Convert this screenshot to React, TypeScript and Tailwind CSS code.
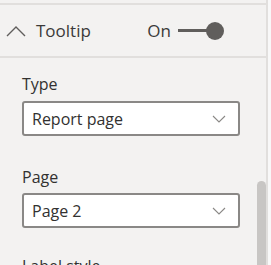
import React from 'react';

const ChevronDown: React.FC = () => (
  <svg width="14" height="8" viewBox="0 0 14 8" fill="none">
    <path d="M1 1l6 6 6-6" stroke="#8a8886" strokeWidth="1.1" />
  </svg>
);

const Dropdown: React.FC<{ value: string }> = ({ value }) => (
  <div className="h-[35px] w-[218px] border-2 border-[#8a8886] rounded-[3px] bg-white flex items-center justify-between pl-[8px] pr-[12px]">
    <span className="text-[16px] text-[#323130]">{value}</span>
    <ChevronDown />
  </div>
);

const App: React.FC = () => {
  return (
    <div
      className="w-[271px] h-[265px] overflow-hidden bg-[#f3f2f1] flex"
      style={{ fontFamily: '"Segoe UI", "Open Sans", sans-serif' }}
    >
      <div className="relative w-[268px] h-full border-r-2 border-[#e1dfdd]">
        <div className="h-[3px]" />

        {/* header */}
        <div className="h-[55px] border-y-2 border-[#e1dfdd] flex items-center">
          <svg width="20" height="12" viewBox="0 0 20 12" fill="none" className="ml-[6px]">
            <path d="M1 11l9-9 9 9" stroke="#605e5c" strokeWidth="1.4" />
          </svg>
          <span className="ml-[10px] text-[17px] text-[#3b3a39]">Tooltip</span>
          <span className="ml-auto text-[17px] text-[#3b3a39]">On</span>
          <div className="ml-[7px] mr-[42px] flex items-center">
            <div className="w-[29px] h-[3px] bg-[#605e5c]" />
            <div className="w-[18px] h-[18px] rounded-full bg-[#605e5c] -ml-[1px]" />
          </div>
        </div>

        {/* options */}
        <div className="pl-[22px]">
          <div className="mt-[15px] text-[16px] text-[#323130] leading-[22px]">Type</div>
          <div className="mt-[6px]">
            <Dropdown value="Report page" />
          </div>

          <div className="mt-[30px] text-[16px] text-[#323130] leading-[22px]">Page</div>
          <div className="mt-[5px]">
            <Dropdown value="Page 2" />
          </div>

          <div className="mt-[27px] text-[16px] text-[#323130] leading-[22px]">Label style</div>
        </div>

        {/* scrollbar thumb */}
        <div className="absolute right-0 top-[181px] w-[9px] h-[100px] rounded-t-[5px] bg-[#c8c6c4]" />
      </div>
      <div className="flex-1 bg-[#f8f8f8]" />
    </div>
  );
};

export default App;
